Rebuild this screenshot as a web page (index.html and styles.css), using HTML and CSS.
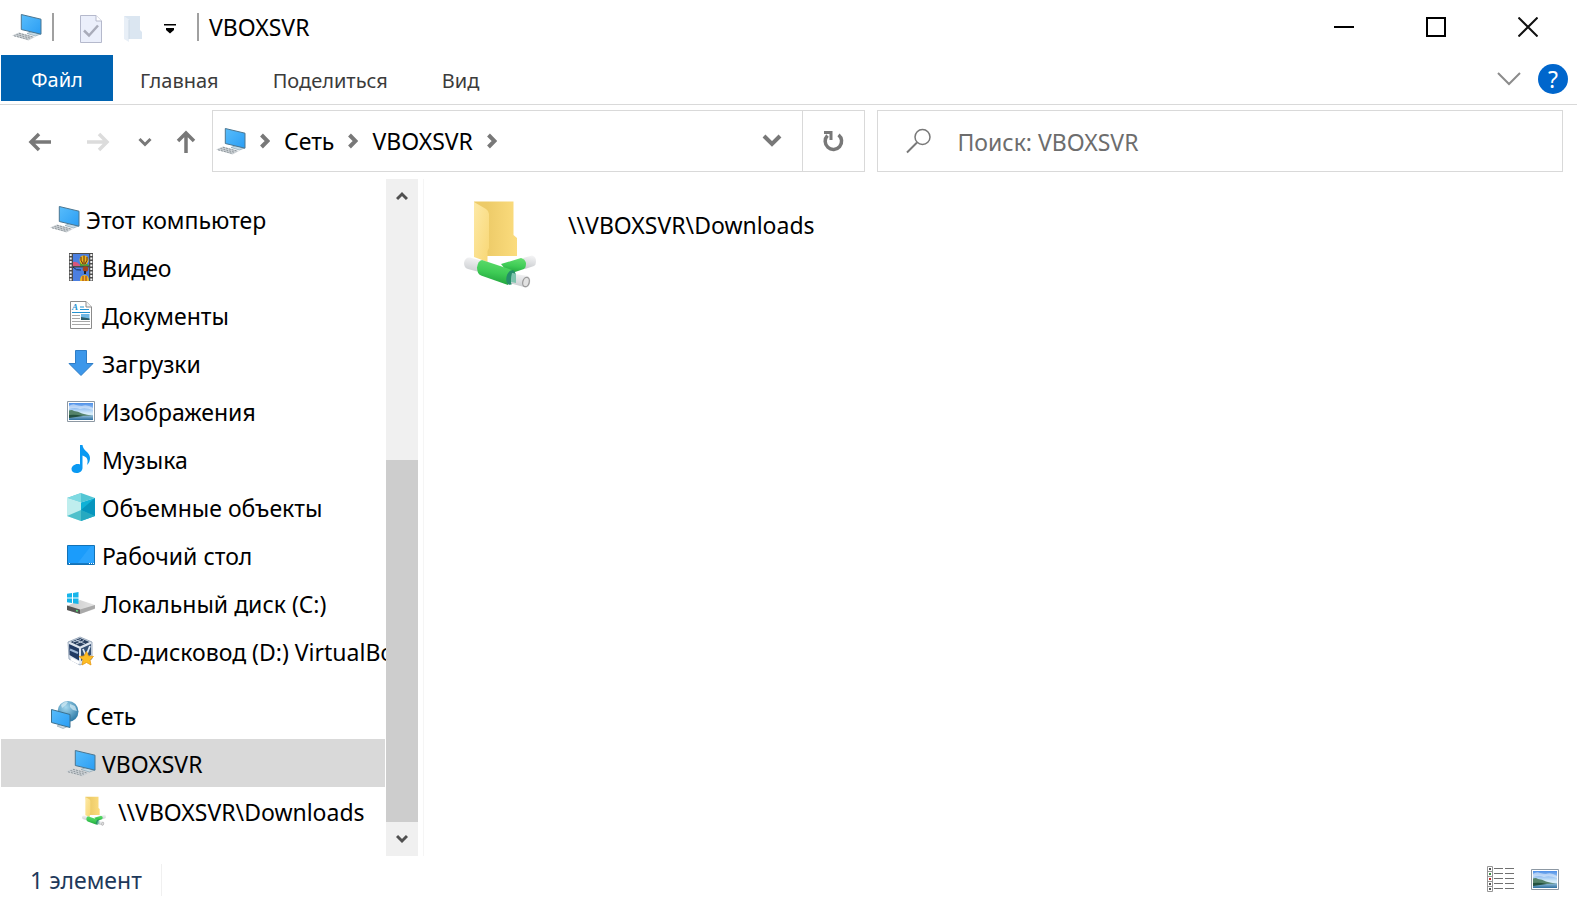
FILE: index.html
```html
<!DOCTYPE html>
<html lang="ru">
  <head>
    <meta charset="UTF-8" />
    <meta name="viewport" content="width=device-width, initial-scale=1.0" />
    <title>VBOXSVR</title>
    <link rel="stylesheet" href="styles.css">
  </head>
  <body>
    <!-- Shared icons -->
    <svg class="sprite" aria-hidden="true">
      <defs>
        <linearGradient id="screen" x1="0" y1="0" x2="1" y2="1">
          <stop offset="0" stop-color="#58bdfb" />
          <stop offset="1" stop-color="#2a9df4" />
        </linearGradient>
        <linearGradient id="folderBack" x1="0" y1="0" x2="1" y2="0">
          <stop offset="0.3" stop-color="#edcb68" />
          <stop offset="1" stop-color="#fbdc7e" />
        </linearGradient>
        <linearGradient id="folderFront" x1="0" y1="0" x2="1" y2="1">
          <stop offset="0" stop-color="#fde9a6" />
          <stop offset="1" stop-color="#f8d775" />
        </linearGradient>
        <linearGradient id="tube" x1="0.6" y1="0" x2="0.4" y2="1">
          <stop offset="0" stop-color="#5fdc6c" />
          <stop offset="0.5" stop-color="#3ecb55" />
          <stop offset="1" stop-color="#1d9f3a" />
        </linearGradient>
        <linearGradient id="cable" x1="0.6" y1="0" x2="0.4" y2="1">
          <stop offset="0" stop-color="#f4f4f5" />
          <stop offset="1" stop-color="#c9cccf" />
        </linearGradient>
        <linearGradient id="sky" x1="0" y1="0" x2="0" y2="1">
          <stop offset="0" stop-color="#4d8fe8" />
          <stop offset="0.6" stop-color="#d5ecfa" />
        </linearGradient>
        <linearGradient id="lake" x1="0" y1="0" x2="0" y2="1">
          <stop offset="0" stop-color="#9cc4dc" />
          <stop offset="1" stop-color="#2d6f9f" />
        </linearGradient>
        <radialGradient id="globe" cx="0.4" cy="0.3" r="0.7">
          <stop offset="0" stop-color="#a5d8ee" />
          <stop offset="1" stop-color="#2f7ca8" />
        </radialGradient>
        <linearGradient id="drive" x1="0" y1="0" x2="1" y2="0">
          <stop offset="0" stop-color="#c9c9c9" />
          <stop offset="1" stop-color="#e4e4e4" />
        </linearGradient>
      </defs>
      <symbol id="icon-pc" viewBox="0 0 30 28">
        <path d="M0 22.5 7 19.500 23 24l-6.500 3.500z" fill="#cdd2d6" />
        <path d="M2 22.800l14.500 3.700M4.500 21.500l14 3.800M7 20.300l14 3.700" stroke="#868e94" stroke-width="0.900" stroke-dasharray="2 1" fill="none" />
        <path d="M15 20.500l5-2 8.500 2.500-5 2z" fill="#c6dbe6" stroke="#7f99a8" stroke-width="0.600" />
        <path d="M9.300 1.500 29 6.200v15L9.300 16.500z" fill="url(#screen)" stroke="#4a7691" stroke-width="1" />
      </symbol>
      <symbol id="icon-picture" viewBox="0 0 28 21">
        <path d="M0.500 0.500h27v20h-27z" fill="#fff" stroke="#8d98a3" />
        <path d="M2 2h24v17H2z" fill="url(#sky)" />
        <path d="M2 5q4-3 7-1 4 1 6 1 5-2 11 2v2q-8-3-13-1-5-2-11 0z" fill="#fff" opacity="0.450" />
        <path d="M2 14h24v5H2z" fill="url(#lake)" />
        <path d="M2 9.500q3-1 5 0.500 4 0 8 2.500 5 1.500 10 2L2 15.500z" fill="#54826a" />
        <path d="M2 14q6-1 14 1L2 17z" fill="#24513f" />
      </symbol>
      <symbol id="icon-share" viewBox="0 0 72 88">
        <path d="M10 1.500h39.500V35l3.500 3v18H20z" fill="url(#folderBack)" />
        <path d="M10 2l12 7q3 2 3 5v34l-1.500 3v11L10 57z" fill="url(#folderFront)" />
        <path d="M6 57.500l11 3v12L4 69q-4-1-4-6 1-6 6-5.500z" fill="url(#cable)" />
        <path d="M59 58l9-2.500q4 1 4 5.500 0 4-2 5l-9 3z" fill="url(#cable)" />
        <path d="M37 64l20-6q4 1 5 5 0 5-2 6L45 74z" fill="url(#tube)" />
        <path d="M18 60l30 10-4 15-27-9.500q-4-2-4-8 1-7 5-7.500z" fill="url(#tube)" />
        <ellipse cx="47" cy="77.500" rx="4.500" ry="7.500" fill="#258d69" transform="rotate(15 47 77.500)" />
        <path d="M48 73.500l16 2.500q3 2 2 7-1 4-4 4.500l-15-4z" fill="url(#cable)" />
        <path d="M48 73l4 1v9l-5-1z" fill="#7ec4ae" />
        <ellipse cx="62" cy="82" rx="3.200" ry="4.800" fill="#e2e2e2" stroke="#9b9b9b" stroke-width="1.300" transform="rotate(15 62 82)" />
      </symbol>
    </svg>

    <!-- Title bar -->
    <header class="titlebar">
      <svg class="title-icon" width="30" height="28"><use href="#icon-pc" /></svg>
      <span class="divider"></span>
      <div class="quick-access">
        <button aria-label="Свойства">
          <svg width="22" height="28" viewBox="0 0 22 28">
            <path d="M0.500 0.500H16L21.500 6v21.500H0.500z" fill="#ebeffb" stroke="#b5b9cc" />
            <path d="M16 0.500V6h5.500" fill="#fff" stroke="#b5b9cc" />
            <path d="M4 15.500l5 5 9-10" fill="none" stroke="#a9acba" stroke-width="2.500" />
          </svg>
        </button>
        <button aria-label="Новая папка">
          <svg width="18" height="28" viewBox="0 0 18 28">
            <path d="M0 1h16v14l2 2v7H4z" fill="#dbe6f1" />
            <path d="M0 1l5 3.500V27l-5-3z" fill="#e8eff7" />
            <path d="M5 5v19" stroke="#cfdae6" />
          </svg>
        </button>
        <button aria-label="Настройка панели быстрого доступа">
          <svg width="12" height="10" viewBox="0 0 12 10">
            <path d="M0 0h12v1.500H0zM2 4h8v2L6 9.500 2 6z" fill="#000" />
          </svg>
        </button>
      </div>
      <span class="divider"></span>
      <h1>VBOXSVR</h1>
      <div class="window-buttons">
        <button aria-label="Свернуть">
          <svg width="20" height="20" viewBox="0 0 20 20"><path d="M0 10h20" stroke="#000" stroke-width="2" /></svg>
        </button>
        <button aria-label="Развернуть">
          <svg width="20" height="20" viewBox="0 0 20 20"><path d="M1 1h18v18H1z" fill="none" stroke="#000" stroke-width="2" /></svg>
        </button>
        <button aria-label="Закрыть">
          <svg width="20" height="20" viewBox="0 0 20 20"><path d="M0.500 0.500l19 19M19.500 0.500l-19 19" stroke="#111" stroke-width="2" /></svg>
        </button>
      </div>
    </header>

    <!-- Ribbon tabs -->
    <div class="ribbon">
      <button class="tab file-tab">Файл</button>
      <button class="tab">Главная</button>
      <button class="tab">Поделиться</button>
      <button class="tab">Вид</button>
      <div class="ribbon-tools">
        <button aria-label="Развернуть ленту">
          <svg width="24" height="14" viewBox="0 0 24 14"><path d="M1 1l11 11L23 1" fill="none" stroke="#8c8c8c" stroke-width="2" /></svg>
        </button>
        <button class="help" aria-label="Справка">?</button>
      </div>
    </div>

    <!-- Navigation row -->
    <div class="navbar">
      <div class="history">
        <button aria-label="Назад">
          <svg width="24" height="20" viewBox="0 0 24 20"><path d="M11 2L3 10l8 8M3 10h20" fill="none" stroke="#787878" stroke-width="3.500" /></svg>
        </button>
        <button aria-label="Вперед" disabled>
          <svg width="24" height="20" viewBox="0 0 24 20"><path d="M13 2l8 8-8 8M21 10H1" fill="none" stroke="#dcdcdc" stroke-width="3.500" /></svg>
        </button>
        <button aria-label="Последние расположения">
          <svg width="14" height="10" viewBox="0 0 14 10"><path d="M1.500 2L7 7.500 12.500 2" fill="none" stroke="#787878" stroke-width="3" /></svg>
        </button>
        <button aria-label="Вверх">
          <svg width="20" height="24" viewBox="0 0 20 24"><path d="M2 11l8-8 8 8M10 3v20" fill="none" stroke="#787878" stroke-width="3.500" /></svg>
        </button>
      </div>
      <div class="address">
        <svg width="30" height="28"><use href="#icon-pc" /></svg>
        <svg class="crumb-arrow" width="10" height="16" viewBox="0 0 10 16"><path d="M1.500 2L7.500 8l-6 6" fill="none" stroke="#787878" stroke-width="4" /></svg>
        <a href="#network">Сеть</a>
        <svg class="crumb-arrow" width="10" height="16" viewBox="0 0 10 16"><path d="M1.500 2L7.500 8l-6 6" fill="none" stroke="#787878" stroke-width="4" /></svg>
        <a href="#vboxsvr">VBOXSVR</a>
        <svg class="crumb-arrow" width="10" height="16" viewBox="0 0 10 16"><path d="M1.500 2L7.500 8l-6 6" fill="none" stroke="#787878" stroke-width="4" /></svg>
        <button class="address-drop" aria-label="Предыдущие расположения">
          <svg width="20" height="14" viewBox="0 0 20 14"><path d="M2 2l8 8 8-8" fill="none" stroke="#787878" stroke-width="4" /></svg>
        </button>
        <button class="refresh" aria-label="Обновить">
          <svg width="22" height="22" viewBox="0 0 22 22">
            <path d="M16.500 4.800A8.200 8.200 0 1 1 5.500 5.500" fill="none" stroke="#787878" stroke-width="3.500" />
            <path d="M2 2.500h7V10" fill="none" stroke="#787878" stroke-width="3" />
          </svg>
        </button>
      </div>
      <label class="search">
        <svg width="26" height="26" viewBox="0 0 26 26">
          <circle cx="16.500" cy="9" r="7.500" fill="none" stroke="#787878" stroke-width="1.500" />
          <path d="M11 14.500L1 24.500" stroke="#787878" stroke-width="2" />
        </svg>
        <input type="search" placeholder="Поиск: VBOXSVR" aria-label="Поиск: VBOXSVR" />
      </label>
    </div>

    <main class="content">
      <!-- Folder tree -->
      <nav class="tree">
        <a class="item" href="#computer">
          <span class="icon"><svg width="30" height="28"><use href="#icon-pc" /></svg></span>Этот компьютер
        </a>
        <a class="item child" href="#video">
          <span class="icon">
            <svg width="24" height="28" viewBox="0 0 24 28">
              <path d="M0 0h24v28H0z" fill="#4c4c4c" />
              <path d="M1.700 1v27M22.300 1v27" stroke="#f2f2f2" stroke-width="2" stroke-dasharray="2 1.500" />
              <path d="M4 1h16v12H4zM4 14.500h16V28H4z" fill="#4b7fe0" />
              <path d="M4 9q4-1 7 3v1H4z" fill="#d9577a" />
              <path d="M11 8l9 4v1h-9z" fill="#4c9b38" />
              <circle cx="15" cy="7" r="4.500" fill="#edb91f" />
              <path d="M15 2.500v9M12 4q-1 3 2 7M18 4q1 3-2 7" fill="none" stroke="#5c2615" stroke-width="1" />
              <circle cx="16.500" cy="16" r="2.800" fill="#a5431d" />
              <path d="M16 18v3" stroke="#222" stroke-width="2" />
              <path d="M4 14q3 4 8 3" stroke="#1d2d4d" fill="none" />
              <path d="M11 28q0-6 4.500-6t4.500 6z" fill="#edb91f" />
              <path d="M14 23v5M17 23v5" stroke="#a02d20" stroke-width="1" />
            </svg>
          </span>Видео
        </a>
        <a class="item child" href="#documents">
          <span class="icon">
            <svg width="22" height="28" viewBox="0 0 22 28">
              <path d="M0.500 0.500H16L21.500 6v21.500H0.500z" fill="#fff" stroke="#8b8b8b" />
              <path d="M16 0.500V6h5.500" fill="#f3f3f3" stroke="#8b8b8b" />
              <text x="2" y="9" class="doc-letter">A</text>
              <path d="M10 6h4M10 8.500h9M2 11.500h18" stroke="#2493d1" stroke-width="1.200" />
              <path d="M2 14.500h8M2 17.500h8M2 20.500h18M2 23.500h18" stroke="#a8a8a8" />
              <path d="M11 13h8.500v6H11z" fill="#70b8e4" />
              <path d="M11 16l8.500 1.500V19H11z" fill="#2d5f6b" />
            </svg>
          </span>Документы
        </a>
        <a class="item child" href="#downloads">
          <span class="icon">
            <svg width="26" height="28" viewBox="0 0 26 28"><path d="M7.500 1.500h11v13h6.500L13 26.500 1 14.500h6.500z" fill="#3c97ea" stroke="#2f7dc6" /></svg>
          </span>Загрузки
        </a>
        <a class="item child" href="#pictures">
          <span class="icon"><svg width="28" height="21"><use href="#icon-picture" /></svg></span>Изображения
        </a>
        <a class="item child" href="#music">
          <span class="icon">
            <svg width="20" height="28" viewBox="0 0 20 28">
              <path d="M9 0h2.500c.500 6 7.500 7 7.500 13 0 3-1 5-3 7 1.500-5 .500-8-4.500-9.500V23c0 3-3 5-6 5s-5-1.500-5-4 3-5 6-5c1 0 2 0 2.500.500z" fill="#0a99f2" />
            </svg>
          </span>Музыка
        </a>
        <a class="item child" href="#objects">
          <span class="icon">
            <svg width="28" height="28" viewBox="0 0 28 28">
              <path d="M0 5L14 0l14 5-14 4.500z" fill="#53c6d4" />
              <path d="M14 0v9.500L0 5z" fill="#7fdae2" />
              <path d="M0 5l14 4.500V28L0 23z" fill="#bfeeee" />
              <path d="M0 23l14-6v11z" fill="#4fc0cb" />
              <path d="M28 5L14 9.500V28l14-5z" fill="#0fb1d6" />
              <path d="M28 5v18l-14-6z" fill="#0795bd" />
              <path d="M28 23l-14-6v11z" fill="#27a9c0" />
            </svg>
          </span>Объемные объекты
        </a>
        <a class="item child" href="#desktop">
          <span class="icon">
            <svg width="28" height="20" viewBox="0 0 28 20">
              <path d="M0.500 0.500h27v19h-27z" fill="#1b9cfb" stroke="#1272b6" />
              <path d="M10 19L24 1h3v18z" fill="#2ba4fd" />
              <path d="M1 18.500h26" stroke="#1679c2" />
              <path d="M2 18.500h1M22 18.500h1M24 18.500h1M26 18.500h1" stroke="#fff" />
            </svg>
          </span>Рабочий стол
        </a>
        <a class="item child" href="#disk-c">
          <span class="icon">
            <svg width="28" height="22" viewBox="0 0 28 22">
              <path d="M0 14l13-6 15 5v4l-15 5L0 18z" fill="url(#drive)" />
              <path d="M0 13.500l13 4V22L0 18z" fill="#555" />
              <path d="M13 17.500l15-4.500v3.500L13 22z" fill="#a9a9a9" />
              <path d="M9 18.500l2 .600" stroke="#5fe07a" stroke-width="1.500" />
              <path d="M0 1.800L5 1v4.500H0zM6 .900L11.500 0v5.500H6zM0 6.500h5V11l-5-.800zM6 6.500h5.500V12L6 11.200z" fill="#17b5ea" />
            </svg>
          </span>Локальный диск (C:)
        </a>
        <a class="item child" href="#disk-d">
          <span class="icon">
            <svg width="28" height="30" viewBox="0 0 28 30">
              <path d="M1 6L13 1l12 5v17l-12 6-11-6z" fill="#dde5ee" stroke="#8a9bb0" stroke-width="0.800" />
              <path d="M3.500 6L13 2l9.500 4L13 10.500z" fill="#29405f" />
              <path d="M6 6l8-2.500M9 8l8-3.500M9 4l9 4" stroke="#c8d5e4" stroke-width="0.900" />
              <path d="M2 8l10 4.500v12L2.500 19z" fill="#203a63" />
              <path d="M3 13.500l8 3.500" stroke="#9db7d5" stroke-width="2" />
              <path d="M14 12.500L24 8v11l-10 6z" fill="#365174" />
              <path d="M16 13l3 7 4-10" fill="none" stroke="#dce7f2" stroke-width="1.800" />
              <path d="M4 23l8 4" stroke="#fff" stroke-width="3" />
              <path d="M19.500 15.500l2 4.500 5 .500-3.500 3.500 1 5-4.500-2.500-4.500 2.500 1-5-4-3.500 5-.500z" fill="#fdbd24" stroke="#e89a14" stroke-width="0.800" />
            </svg>
          </span>CD-дисковод (D:) VirtualBox
        </a>
        <a class="item network" href="#network">
          <span class="icon">
            <svg width="28" height="28" viewBox="0 0 28 28">
              <circle cx="17" cy="10.500" r="10.500" fill="url(#globe)" />
              <path d="M10 4q3-4 7-3l-2 3-4 3zM19 3l5 2 2 5-4-1-3-3z" fill="#d5edf5" opacity="0.700" />
              <path d="M6 25l5-2 6 2.500-5 2z" fill="#d3dbe0" stroke="#8ba1ad" stroke-width="0.600" />
              <path d="M0.500 8.500l18.500 5v13L0.500 21.500z" fill="url(#screen)" stroke="#3c718f" />
            </svg>
          </span>Сеть
        </a>
        <a class="item child selected" href="#vboxsvr">
          <span class="icon"><svg width="30" height="28"><use href="#icon-pc" /></svg></span>VBOXSVR
        </a>
        <a class="item grandchild" href="#share">
          <span class="icon"><svg width="24" height="30"><use href="#icon-share" /></svg></span>\\VBOXSVR\Downloads
        </a>
      </nav>
      <div class="scrollbar">
        <button aria-label="Прокрутить вверх">
          <svg width="12" height="10" viewBox="0 0 12 10"><path d="M1 8l5-5 5 5" fill="none" stroke="#505050" stroke-width="3" /></svg>
        </button>
        <div class="track"></div>
        <div class="thumb"></div>
        <button aria-label="Прокрутить вниз">
          <svg width="12" height="10" viewBox="0 0 12 10"><path d="M1 2l5 5 5-5" fill="none" stroke="#505050" stroke-width="3" /></svg>
        </button>
      </div>

      <!-- Folder contents -->
      <section class="files">
        <a class="file" href="#share">
          <svg width="72" height="88"><use href="#icon-share" /></svg>
          <span>\\VBOXSVR\Downloads</span>
        </a>
      </section>
    </main>

    <!-- Status bar -->
    <footer class="statusbar">
      <span class="count">1 элемент</span>
      <div class="views">
        <button aria-label="Таблица">
          <svg width="28" height="26" viewBox="0 0 28 26">
            <path d="M0.500 0.500h5v25h-5zM0.500 5.500h5M0.500 10.500h5M0.500 15.500h5M0.500 20.500h5" fill="#fff" stroke="#969696" />
            <path d="M2 3h2M2 18h2M2 23h2" stroke="#555" stroke-width="2" />
            <path d="M2 8h2" stroke="#3d8d45" stroke-width="2" />
            <path d="M2 13h2" stroke="#b92d2d" stroke-width="2" />
            <path d="M7 2.500h9M18 2.500h9M7 7.500h9M18 7.500h9M7 12.500h9M18 12.500h9M7 17.500h9M18 17.500h9M7 22.500h9M18 22.500h9" stroke="#707070" />
          </svg>
        </button>
        <button aria-label="Крупные значки">
          <svg width="28" height="21"><use href="#icon-picture" /></svg>
        </button>
      </div>
    </footer>
  </body>
</html>
```
FILE: styles.css
```css
* {
  box-sizing: border-box;
}
body {
  font-family: "Noto Sans", "Open Sans", sans-serif;
  font-size: 23px;
  line-height: 32px;
  color: #000;
  background-color: #fff;
  margin: 0;
  min-height: 100vh;
  display: flex;
  flex-direction: column;
}
a {
  color: inherit;
  text-decoration: none;
}
button {
  font: inherit;
  color: inherit;
  background: none;
  border: none;
  padding: 0;
  display: flex;
  align-items: center;
  justify-content: center;
}
svg {
  display: block;
  flex-shrink: 0;
}
.sprite {
  position: absolute;
  width: 0;
  height: 0;
}

/* Title bar */
.titlebar {
  height: 55px;
  display: flex;
  align-items: center;
  padding: 0 3px 2px 12px;
}
.divider {
  width: 2px;
  height: 28px;
  background-color: #a0a0a0;
}
.title-icon {
  margin-right: 10px;
}
.quick-access {
  display: flex;
  align-items: center;
  gap: 22px;
  padding: 4px 21px 0 26px;
}
.titlebar h1 {
  font-size: 23px;
  font-weight: normal;
  margin: 0 0 0 10px;
}
.window-buttons {
  display: flex;
  margin-left: auto;
}
.window-buttons button {
  width: 92px;
  height: 52px;
}

/* Ribbon */
.ribbon {
  display: flex;
  height: 50px;
  padding: 0 9px 3px 1px;
  border-bottom: 1px solid #d9d9d9;
}
.tab {
  font-size: 20px;
  color: #3b3b3b;
  padding: 6px 27px 0;
}
.file-tab {
  width: 112px;
  background-color: #0063b1;
  color: #fff;
  padding-top: 4px;
}
.ribbon-tools {
  display: flex;
  align-items: center;
  gap: 17px;
  margin-left: auto;
  padding-top: 2px;
}
.help {
  width: 30px;
  height: 30px;
  border-radius: 50%;
  background-color: #0066cc;
  color: #fff;
}

/* Navigation row */
.navbar {
  display: flex;
  padding: 5px 14px 0 28px;
}
.history {
  display: flex;
  align-items: center;
  width: 184px;
  padding-top: 2px;
  gap: 28px;
}
.history button:first-child {
  margin-right: 6px;
}
.history button:last-child {
  margin-left: -4px;
}
.address {
  display: flex;
  align-items: center;
  flex: 647;
  height: 62px;
  border: 1px solid #d9d9d9;
  padding-left: 3px;
}
.crumb-arrow {
  margin: 0 14px;
}
.address-drop {
  width: 60px;
  height: 60px;
  margin-left: auto;
}
.refresh {
  width: 62px;
  height: 60px;
  border-left: 1px solid #d9d9d9;
}
.search {
  display: flex;
  align-items: center;
  flex: 656;
  height: 62px;
  margin-left: 12px;
  padding-left: 28px;
  border: 1px solid #d9d9d9;
}
.search input {
  flex: 1;
  min-width: 0;
  margin-left: 26px;
  padding: 2px 0 0;
  border: none;
  outline: none;
  background: none;
  font: inherit;
}
.search input::placeholder {
  color: #6d6d6d;
}

/* Content */
.content {
  display: flex;
  flex: 1;
  margin-top: 7px;
}
.tree {
  width: 386px;
  padding: 16px 1px 20px;
  overflow: hidden;
}
.item {
  display: flex;
  align-items: center;
  height: 48px;
  padding: 2px 0 0 49px;
  white-space: nowrap;
}
.child {
  padding-left: 65px;
}
.grandchild {
  padding-left: 81px;
}
.icon {
  display: flex;
  justify-content: center;
  flex-shrink: 0;
  width: 30px;
  margin: 0 6px 2px 0;
}
.grandchild .icon {
  justify-content: flex-start;
}
.network {
  margin-top: 16px;
}
.selected {
  background-color: #d9d9d9;
}
.doc-letter {
  font: italic bold 9px "Liberation Serif", serif;
  fill: #2493d1;
}
.scrollbar {
  display: flex;
  flex-direction: column;
  width: 32px;
  background-color: #f0f0f0;
}
.scrollbar button {
  height: 34px;
}
.track {
  flex: 15;
}
.thumb {
  flex: 22;
  background-color: #cdcdcd;
}
.files {
  flex: 1;
  margin-left: 5px;
  padding: 21px 40px;
  border-left: 1px solid #f5f5f5;
}
.file {
  display: inline-flex;
  gap: 32px;
}
.file span {
  padding-top: 9px;
}

/* Status bar */
.statusbar {
  display: flex;
  align-items: center;
  justify-content: space-between;
  height: 48px;
  padding: 0 18px 0 30px;
  color: #1e395b;
}
.count {
  padding-right: 19px;
  border-right: 1px solid #f0f0f0;
}
.views {
  display: flex;
  gap: 16px;
  padding-bottom: 2px;
}
```
